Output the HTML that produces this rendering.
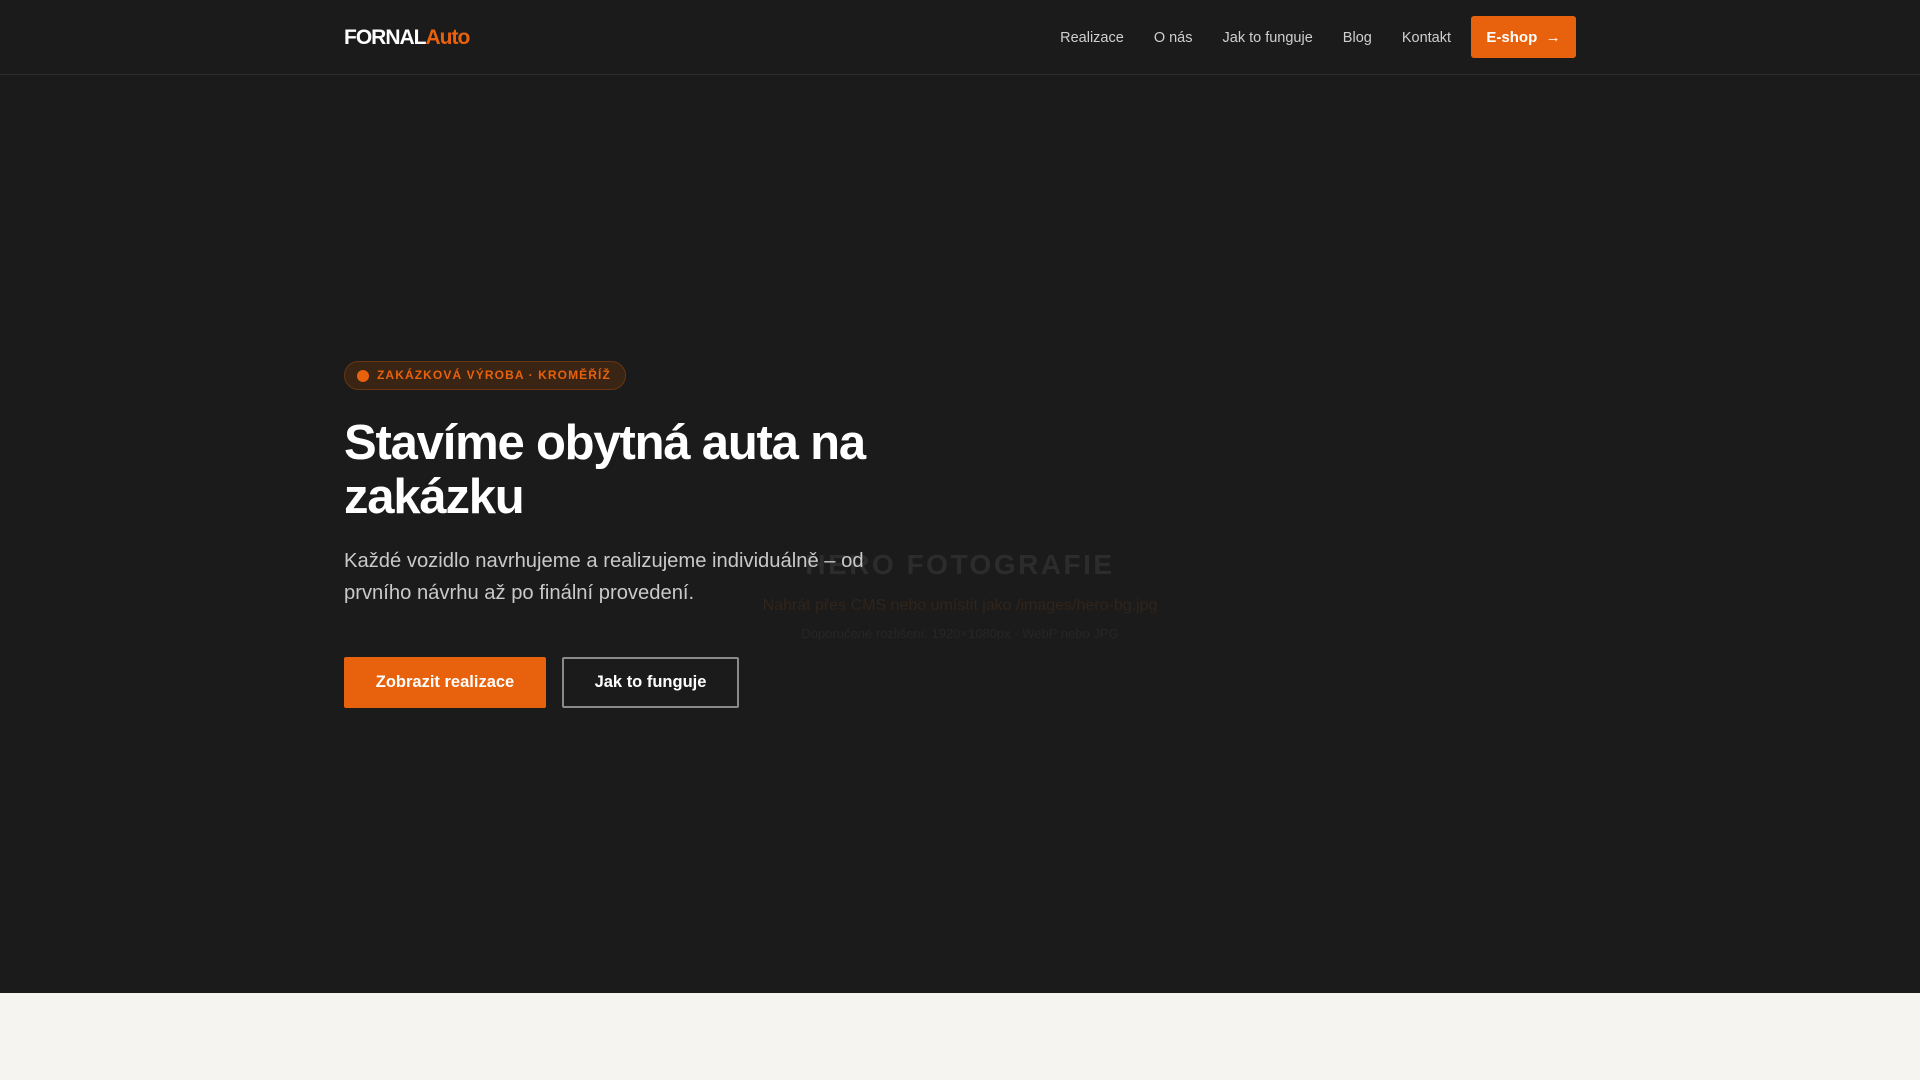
<!DOCTYPE html>
<html><head><meta charset="utf-8"><style>
*{margin:0;padding:0;box-sizing:border-box}
body{width:1920px;height:1080px;background:#f5f4f0;font-family:"Liberation Sans",sans-serif;overflow:hidden;position:relative}
.hero{position:absolute;left:0;top:0;width:1920px;height:993px;background:#1b1b1b}
header{position:absolute;left:0;top:0;width:1920px;height:75px;border-bottom:1px solid #2c2c2c}
.logo{position:absolute;left:344px;top:26px;font-size:21px;font-weight:bold;color:#fff;letter-spacing:-1px}
.logo span{color:#e8610c}
nav{position:absolute;right:344px;top:17px;height:42px;display:flex;align-items:center}
nav a{color:#cfcfcf;font-size:14.5px;margin-right:30px;text-decoration:none}
nav a.last{margin-right:20px}
.eshop{background:#e8610c;color:#fff;font-weight:bold;font-size:15px;width:105px;height:42px;border-radius:3px;display:flex;align-items:center;justify-content:center;margin-top:-2px}
.ph{position:absolute;left:0;width:1920px;text-align:center}
.badge{position:absolute;left:344px;top:361px;height:29px;width:282px;border:1px solid #6a3512;background:#3a2414;border-radius:15px;color:#e8610c;font-size:12px;font-weight:bold;letter-spacing:1.1px;line-height:27px;padding-left:32px}
.badge:before{content:"";position:absolute;left:12px;top:8px;width:12px;height:12px;border-radius:50%;background:#e8610c}
h1{position:absolute;left:344px;top:416px;width:560px;font-size:49px;line-height:54px;color:#fff;font-weight:bold;letter-spacing:-1.2px}
p.lead{position:absolute;left:344px;top:545px;width:550px;font-size:20.2px;line-height:32px;color:#c9c9c9}
.b1{position:absolute;left:344px;top:657px;width:202px;height:51px;background:#e8610c;color:#fff;font-weight:bold;font-size:16.5px;display:flex;align-items:center;justify-content:center;border-radius:2px}
.b2{position:absolute;left:562px;top:657px;width:177px;height:51px;border:2px solid #8a8a8a;color:#fff;font-weight:bold;font-size:16.5px;display:flex;align-items:center;justify-content:center;border-radius:2px}
</style></head><body>
<div class="hero">
<div class="ph" style="top:549px;font-size:28px;font-weight:bold;letter-spacing:2.5px;color:#2c2c2c">HERO FOTOGRAFIE</div>
<div class="ph" style="top:597px;font-size:16px;color:#30241b">Nahrát přes CMS nebo umístit jako /images/hero-bg.jpg</div>
<div class="ph" style="top:626px;font-size:13px;color:#262626">Doporučené rozlišení: 1920×1080px · WebP nebo JPG</div>
<header>
<div class="logo">FORNAL<span>Auto</span></div>
<nav><a>Realizace</a><a>O nás</a><a>Jak to funguje</a><a>Blog</a><a class="last">Kontakt</a><div class="eshop">E-shop&nbsp;&nbsp;→</div></nav>
</header>
<div class="badge">ZAKÁZKOVÁ VÝROBA · KROMĚŘÍŽ</div>
<h1>Stavíme obytná auta na zakázku</h1>
<p class="lead">Každé vozidlo navrhujeme a realizujeme individuálně – od prvního návrhu až po finální provedení.</p>
<div class="b1">Zobrazit realizace</div>
<div class="b2">Jak to funguje</div>
</div>
</body></html>
